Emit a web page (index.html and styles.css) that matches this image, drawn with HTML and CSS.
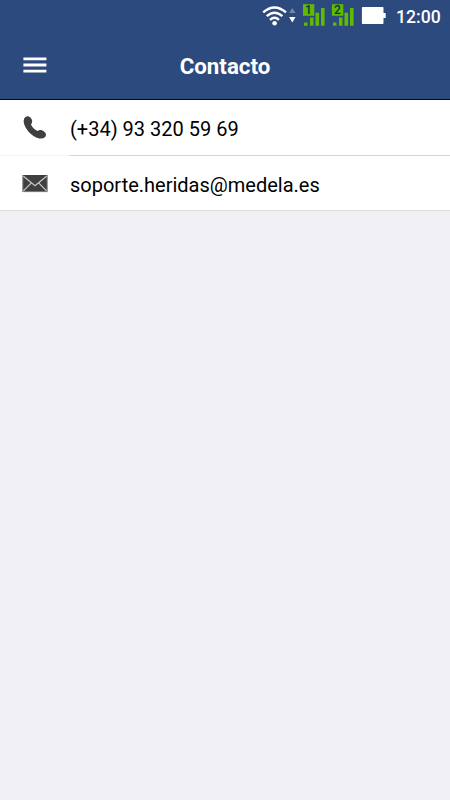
FILE: index.html
```html
<!DOCTYPE html>
<html lang="es">
<head>
<meta charset="utf-8">
<title>Contacto</title>
<link rel="stylesheet" href="styles.css">
</head>
<body>
<header class="top">
  <div class="status">
    <svg class="wifi" width="36" height="24" viewBox="261 4 36 24">
      <g fill="none" stroke="#fff" stroke-width="2.4">
        <path d="M263.2 12.4Q274.5 2.6 286 12.4"/>
        <path d="M266.7 16.2Q274.5 9.2 282.4 16.2"/>
        <path d="M270 19.8Q274.5 15.8 279 19.8"/>
      </g>
      <circle cx="274.6" cy="23.2" r="2.3" fill="#fff"/>
      <path fill="#76879f" d="M292.3 8l3.2 5h-6.4z"/>
      <path fill="#fff" d="M289.1 17h6.4l-3.2 5.4z"/>
    </svg>
    <div class="sim">
      <svg width="23" height="24" viewBox="303 4 23 24" fill="#5fba00">
        <path d="M303 4.3h11.3v11.5H303zM304 22.4h3.5v3.4H304zM310 17.6h3.5v8.2H310zM315.5 12.8h3.6v13h-3.6zM321 8h3.6v17.8H321z"/>
      </svg>
      <span class="sim-no">1</span>
    </div>
    <div class="sim">
      <svg width="23" height="24" viewBox="303 4 23 24" fill="#5fba00">
        <path d="M303 4.3h11.3v11.5H303zM304 22.4h3.5v3.4H304zM310 17.6h3.5v8.2H310zM315.5 12.8h3.6v13h-3.6zM321 8h3.6v17.8H321z"/>
      </svg>
      <span class="sim-no">2</span>
    </div>
    <svg class="battery" width="26" height="24" viewBox="361 4 26 24">
      <path fill="#fff" d="M362.7 7h20q.8 0 .8.8V13h2.2v5h-2.2v5.2q0 .8-.8.8h-20q-.8 0-.8-.8V7.800q0-.8.8-.8z"/>
    </svg>
    <span class="clock">12:00</span>
  </div>
  <div class="bar">
    <svg class="menu" width="24" height="16" viewBox="0 0 24 16" fill="#fff">
      <path d="M.4.5h23v2.800h-23zM.4 6.600h23v2.800h-23zM.4 12.700h23v2.800h-23z"/>
    </svg>
    <h1 class="title">Contacto</h1>
  </div>
</header>
<main class="list">
  <a class="row">
    <svg class="icon" width="26" height="26" viewBox="22 115 26 26">
      <path fill="#3f3f3f" d="M25.800 116.700Q28 115.600 30.200 117.300Q32.700 119.800 32.100 122.300Q31.900 123.500 31 124.300Q31.500 126.200 33.500 128.200Q35.700 130.400 37.800 130.900Q39 129.700 41.300 130.100Q43.600 130.700 45.500 133Q46.800 135 45.200 136.900Q43 139 39.300 138.500Q34.500 137.700 29 132.300Q24 126.300 23.600 121.200Q23.500 117.900 25.800 116.700z"/>
    </svg>
    <span class="text">(+34) 93 320 59 69</span>
  </a>
  <a class="row">
    <svg class="icon" width="26" height="26" viewBox="22 171 26 26">
      <path fill="#3f3f3f" d="M22.500 175h25v17h-25z"/>
      <path fill="none" stroke="#c8c8c8" stroke-width="1.200" d="M23.200 176l11.800 9.700 11.800-9.700M23.200 191.200l8.400-8.500M46.800 191.200l-8.400-8.500"/>
      <path fill="none" stroke="#9a9a9a" stroke-width=".8" d="M22.800 175.500v16.200h24.400v-16.200"/>
    </svg>
    <span class="text">soporte.heridas@medela.es</span>
  </a>
</main>
</body>
</html>
```
FILE: styles.css
```css
* {
  box-sizing: border-box;
}

body {
  margin: 0;
  min-height: 100vh;
  background: #efeff4;
  font-family: Roboto, "Liberation Sans", sans-serif;
  color: #000;
}

.top {
  height: 100px;
  background: #2c4a7e;
  border-bottom: 1px solid #00005c;
  color: #fff;
}

.status {
  display: flex;
  height: 33px;
  padding: 4px 10px 0 261px;
}

.status svg {
  display: block;
  flex: none;
}

.wifi {
  margin-right: 6px;
}

.sim {
  position: relative;
  width: 23px;
  margin-right: 6px;
}

.sim-no {
  position: absolute;
  left: 0;
  top: 0;
  width: 11px;
  font-size: 12px;
  line-height: 12px;
  font-weight: 500;
  text-align: center;
  color: #12303a;
}

.battery {
  margin-right: 9px;
}

.clock {
  font-size: 17.6px;
  line-height: 27px;
  font-weight: 500;
  white-space: nowrap;
}

.bar {
  display: grid;
  grid-template-columns: 47px 1fr 47px;
  align-items: center;
  height: 66px;
}

.menu {
  justify-self: end;
  margin-top: -2px;
}

.title {
  margin: 1px 0 0;
  font-size: 22.3px;
  line-height: 27px;
  font-weight: 700;
  text-align: center;
}

.list {
  background: #fff;
  border-bottom: 1px solid #dededf;
}

.row {
  display: flex;
  align-items: center;
  height: 54px;
  padding: 2px 0 0 22px;
}

.icon {
  flex: none;
  margin-right: 22px;
}

.text {
  flex: 1;
  height: 56px;
  font-size: 20px;
  line-height: 58px;
}

.row:first-child {
  height: 56px;
  padding-top: 0;
  background: linear-gradient(#f4f4f4, #f4f4f4) bottom / 100% 1px no-repeat;
}

.row:first-child .text {
  border-bottom: 1px solid #d4d4d6;
}
```
